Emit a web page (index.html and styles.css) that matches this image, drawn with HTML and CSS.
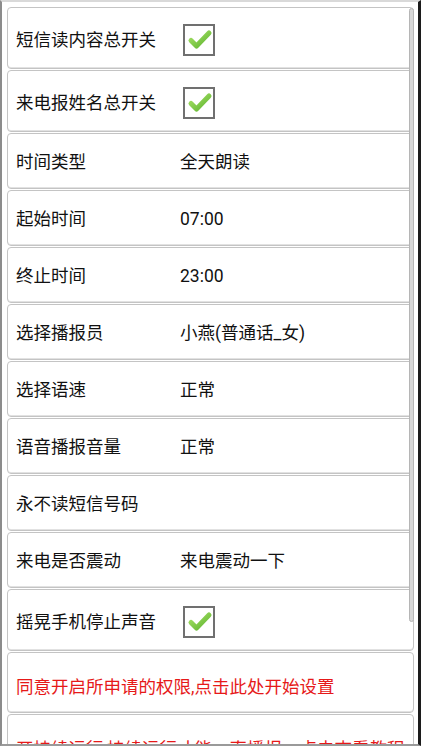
FILE: index.html
```html
<!DOCTYPE html>
<html lang="zh">
<head>
<meta charset="utf-8">
<title>设置</title>
<link rel="stylesheet" href="styles.css">
</head>
<body>
<div class="frame">
  <div class="list">
    <div class="row row-tall">
      <span class="label">短信读内容总开关</span>
      <span class="check"><svg viewBox="0 0 32 32" width="32" height="32"><defs><linearGradient id="g1" x1="0" y1="0" x2="1" y2="1"><stop offset="0" stop-color="#a6e067"/><stop offset="1" stop-color="#5fb52f"/></linearGradient></defs><rect x="1" y="1" width="30" height="30" fill="#fff" stroke="#707070" stroke-width="2"/><path d="M8 16.5 L13.5 22 L26 9" fill="none" stroke="url(#g1)" stroke-width="5" stroke-linecap="round" stroke-linejoin="round"/></svg></span>
    </div>
    <div class="row row-tall">
      <span class="label">来电报姓名总开关</span>
      <span class="check"><svg viewBox="0 0 32 32" width="32" height="32"><rect x="1" y="1" width="30" height="30" fill="#fff" stroke="#707070" stroke-width="2"/><path d="M8 16.5 L13.5 22 L26 9" fill="none" stroke="url(#g1)" stroke-width="5" stroke-linecap="round" stroke-linejoin="round"/></svg></span>
    </div>
    <div class="row">
      <span class="label">时间类型</span>
      <span class="value">全天朗读</span>
    </div>
    <div class="row">
      <span class="label">起始时间</span>
      <span class="value">07:00</span>
    </div>
    <div class="row">
      <span class="label">终止时间</span>
      <span class="value">23:00</span>
    </div>
    <div class="row">
      <span class="label">选择播报员</span>
      <span class="value">小燕(普通话_女)</span>
    </div>
    <div class="row">
      <span class="label">选择语速</span>
      <span class="value">正常</span>
    </div>
    <div class="row">
      <span class="label">语音播报音量</span>
      <span class="value">正常</span>
    </div>
    <div class="row">
      <span class="label">永不读短信号码</span>
    </div>
    <div class="row">
      <span class="label">来电是否震动</span>
      <span class="value">来电震动一下</span>
    </div>
    <div class="row row-tall">
      <span class="label">摇晃手机停止声音</span>
      <span class="check"><svg viewBox="0 0 32 32" width="32" height="32"><rect x="1" y="1" width="30" height="30" fill="#fff" stroke="#707070" stroke-width="2"/><path d="M8 16.5 L13.5 22 L26 9" fill="none" stroke="url(#g1)" stroke-width="5" stroke-linecap="round" stroke-linejoin="round"/></svg></span>
    </div>
    <div class="row row-red">
      <span class="alert">同意开启所申请的权限,点击此处开始设置</span>
    </div>
    <div class="row row-red">
      <span class="alert">开持续运行,持续运行才能一直播报，点击查看教程</span>
    </div>
  </div>
  <div class="scrollbar"></div>
</div>
</body>
</html>
```

FILE: styles.css
```css
html, body {
  margin: 0;
  padding: 0;
  background: #ffffff;
}

body {
  font-family: Roboto, "Noto Sans CJK SC", sans-serif;
  font-size: 17.5px;
  color: #111111;
}

.frame {
  position: relative;
  box-sizing: border-box;
  width: 421px;
  height: 746px;
  border-left: 2px solid #8c8c8c;
  border-top: 2px solid #d9d9d9;
  border-right: 3px solid #1c1c1c;
  border-bottom: 2px solid #9a9a9a;
  padding: 5px 4px 0 5px;
  overflow: hidden;
  background: #ffffff;
}

.list {
  display: flex;
  flex-direction: column;
  gap: 1px;
}

.row {
  box-sizing: border-box;
  height: 56px;
  flex: 0 0 auto;
  display: flex;
  align-items: center;
  padding: 1px 8px 0 8px;
  border: 1px solid #c4c4c4;
  border-radius: 4px;
  box-shadow: inset 0 -1px 0 #e2e2e2;
  background: #ffffff;
}

.row-tall {
  height: 62px;
  padding-top: 3px;
}

.row-red {
  height: 61px;
  align-items: flex-start;
  padding-top: 23px;
}

.label {
  width: 164px;
  flex: 0 0 auto;
  line-height: 22px;
  white-space: nowrap;
}

.value {
  line-height: 22px;
  white-space: nowrap;
}

.check {
  display: flex;
  margin-left: 3px;
}

.alert {
  color: #e61919;
  line-height: 22px;
  white-space: nowrap;
}

.scrollbar {
  position: absolute;
  right: 4px;
  top: 6px;
  width: 3px;
  height: 612px;
  border: 1px solid #b5b5b5;
  border-radius: 3px;
  background: #d6d6d6;
}
```
